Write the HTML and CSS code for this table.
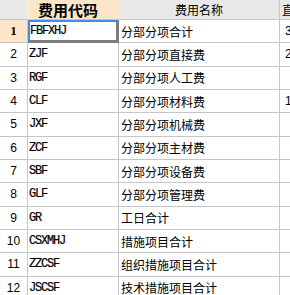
FILE: index.html
```html
<!DOCTYPE html>
<html>
<head>
<meta charset="utf-8">
<link rel="stylesheet" href="styles.css">
</head>
<body>
<div class="grid">
  <div class="hd hd-corner"></div>
  <div class="hd hd-code">费用代码</div>
  <div class="hd hd-name">费用名称</div>
  <div class="hd hd-base">直接费基数</div>

  <div class="num num-sel">1</div><div class="code code-sel">FBFXHJ</div><div class="name">分部分项合计</div><div class="base">3456.00</div>
  <div class="num">2</div><div class="code">ZJF</div><div class="name">分部分项直接费</div><div class="base">2345.00</div>
  <div class="num">3</div><div class="code">RGF</div><div class="name">分部分项人工费</div><div class="base"></div>
  <div class="num">4</div><div class="code">CLF</div><div class="name">分部分项材料费</div><div class="base">1234.00</div>
  <div class="num">5</div><div class="code">JXF</div><div class="name">分部分项机械费</div><div class="base"></div>
  <div class="num">6</div><div class="code">ZCF</div><div class="name">分部分项主材费</div><div class="base"></div>
  <div class="num">7</div><div class="code">SBF</div><div class="name">分部分项设备费</div><div class="base"></div>
  <div class="num">8</div><div class="code">GLF</div><div class="name">分部分项管理费</div><div class="base"></div>
  <div class="num">9</div><div class="code">GR</div><div class="name">工日合计</div><div class="base"></div>
  <div class="num">10</div><div class="code">CSXMHJ</div><div class="name">措施项目合计</div><div class="base"></div>
  <div class="num">11</div><div class="code">ZZCSF</div><div class="name">组织措施项目合计</div><div class="base"></div>
  <div class="num">12</div><div class="code">JSCSF</div><div class="name">技术措施项目合计</div><div class="base"></div>
</div>
</body>
</html>
```
FILE: styles.css
```css
html, body {
  margin: 0;
  padding: 0;
  background: #ffffff;
  overflow: hidden;
}

.grid {
  display: grid;
  grid-template-columns: 28px 91px 161px 80px;
  grid-template-rows: 20px repeat(12, 23.333px);
  width: 360px;
  font-family: "Noto Sans CJK SC", "Liberation Sans", sans-serif;
  font-size: 12px;
  color: #000000;
}

.grid > div {
  box-sizing: border-box;
  border-right: 1px solid #c6c6c6;
  border-bottom: 1px solid #c6c6c6;
  display: flex;
  align-items: center;
  white-space: nowrap;
  overflow: hidden;
}

.hd {
  background: #e8e8e8;
  justify-content: center;
  line-height: 1;
}

.hd-corner {
  border-right-color: #f2f2f2 !important;
}

.hd-code {
  background: #fde6c8;
  font-weight: bold;
  font-size: 15px;
  padding-right: 10px;
  border-right-color: #fde6c8 !important;
}

.hd-name {
  font-size: 12px;
}

.hd-base {
  justify-content: flex-start;
  padding-left: 2px;
}

.num {
  justify-content: center;
  font-family: "Liberation Sans", sans-serif;
  font-size: 12px;
}

.num-sel {
  background: #fde6c8;
  font-weight: bold;
  font-family: "Liberation Serif", serif;
  font-size: 13px;
}

.code {
  font-family: "Liberation Mono", monospace;
  font-size: 12px;
  letter-spacing: -1.2px;
  padding-left: 1px;
  -webkit-text-stroke: 0.2px #000000;
}

.code-sel {
  border-top: 2px solid #3b8eea;
  border-left: 2px solid #3b8eea;
  border-right: 3px solid #7c7c7c !important;
  border-bottom: 3px solid #7c7c7c !important;
  padding-left: 0;
}

.name {
  padding-left: 2px;
}

.base {
  padding-left: 5px;
  font-family: "Liberation Sans", sans-serif;
}
```
